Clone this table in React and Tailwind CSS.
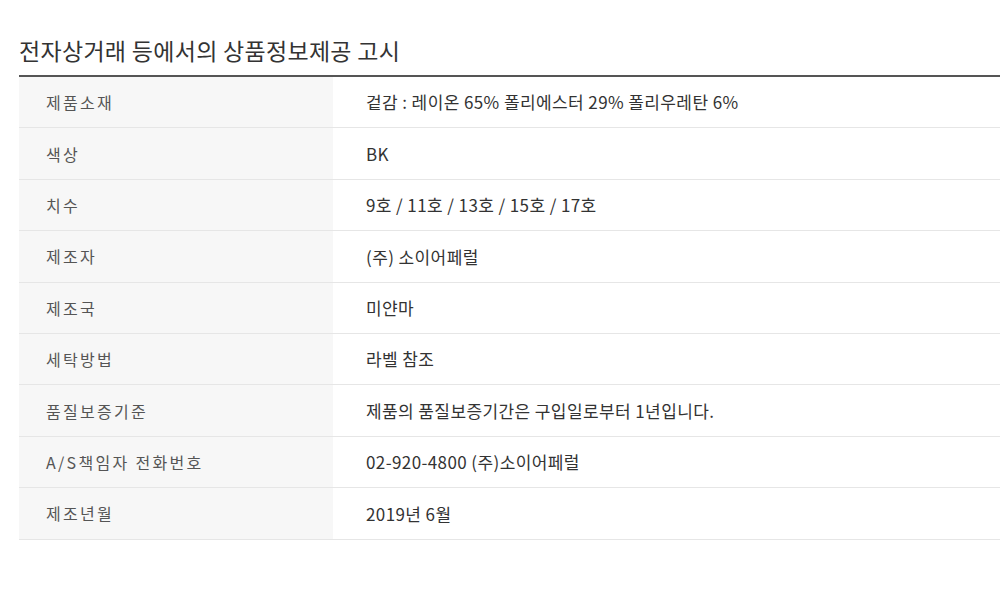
export default function App() {
  const rows = [
    ["제품소재", "겉감 : 레이온 65% 폴리에스터 29% 폴리우레탄 6%"],
    ["색상", "BK"],
    ["치수", "9호 / 11호 / 13호 / 15호 / 17호"],
    ["제조자", "(주) 소이어페럴"],
    ["제조국", "미얀마"],
    ["세탁방법", "라벨 참조"],
    ["품질보증기준", "제품의 품질보증기간은 구입일로부터 1년입니다."],
    ["A/S책임자 전화번호", "02-920-4800 (주)소이어페럴"],
    ["제조년월", "2019년 6월"],
  ];
  return (
    <div
      className="w-[1000px] h-[607px] bg-white pt-[35px] pl-[19px] overflow-hidden"
      style={{ fontFamily: '"Noto Sans CJK KR", "Noto Sans", sans-serif' }}
    >
      <h1 className="text-[23px] leading-[30px] tracking-[0.3px] text-[#333] font-normal">
        전자상거래 등에서의 상품정보제공 고시
      </h1>
      <div className="mt-[10px] border-t-2 border-[#555]">
        {rows.map(([k, v], i) => (
          <div key={i} className="flex h-[51.4px] border-b border-[#e6e6e6]">
            <div className="w-[314px] bg-[#f7f7f7] flex items-center pl-[27px] text-[16px] tracking-[2.3px] text-[#555]">
              {k}
            </div>
            <div className="flex-1 flex items-center pl-[33px] text-[17px] tracking-[0.4px] text-[#333]">
              {v}
            </div>
          </div>
        ))}
      </div>
    </div>
  );
}
